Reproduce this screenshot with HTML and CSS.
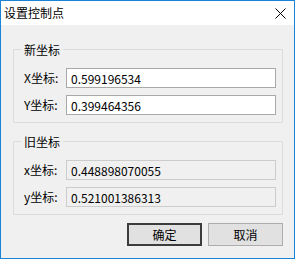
FILE: index.html
```html
<!DOCTYPE html>
<html lang="zh-CN">
<head>
    <meta charset="UTF-8">
    <title>设置控制点</title>
    <link rel="stylesheet" href="styles.css">
</head>
<body>
    <div class="window">
        <div class="titlebar">
            <span class="title">设置控制点</span>
            <svg class="close" width="11" height="11" viewBox="0 0 11 11">
                <path d="M0.5 0.5 L10.5 10.5 M10.5 0.5 L0.5 10.5" stroke="#000" stroke-width="1"/>
            </svg>
        </div>

        <div class="client">
            <fieldset class="group">
                <legend>新坐标</legend>
                <div class="field">
                    <label>X坐标:</label>
                    <input type="text" value="0.599196534">
                </div>
                <div class="field">
                    <label>Y坐标:</label>
                    <input type="text" value="0.399464356">
                </div>
            </fieldset>

            <fieldset class="group">
                <legend>旧坐标</legend>
                <div class="field">
                    <label>x坐标:</label>
                    <input type="text" class="readonly" value="0.448898070055" readonly>
                </div>
                <div class="field">
                    <label>y坐标:</label>
                    <input type="text" class="readonly" value="0.521001386313" readonly>
                </div>
            </fieldset>

            <div class="buttons">
                <button class="btn btn-default">确定</button>
                <button class="btn">取消</button>
            </div>
        </div>
    </div>
</body>
</html>
```

FILE: styles.css
```css
* {
    margin: 0;
    padding: 0;
    box-sizing: border-box;
}

body {
    font-family: "Noto Sans CJK SC", sans-serif;
    font-size: 12px;
    color: #000;
    background: #fff;
}

.window {
    width: 295px;
    height: 259px;
    border: 1px solid #1883d7;
    display: flex;
    flex-direction: column;
}

.titlebar {
    height: 24px;
    background: #fff;
    display: flex;
    align-items: center;
    justify-content: space-between;
    padding: 0 8px 0 3px;
}

.title {
    line-height: 16px;
}

.close {
    display: block;
    margin-top: 1px;
}

.client {
    flex: 1;
    background: #f0f0f0;
    padding: 17px 11px 0 12px;
}

.group {
    border: 1px solid #dcdcdc;
    padding: 11px 6px 7px 10px;
    min-width: 0;
}

.group + .group {
    margin-top: 11px;
}

.group legend {
    line-height: 15px;
    padding: 0 3px;
    margin-left: -3px;
}

.field {
    display: flex;
    align-items: center;
    height: 20px;
}

.field + .field {
    margin-top: 7px;
}

.field label {
    width: 42px;
    line-height: 16px;
}

.field input {
    width: 210px;
    height: 20px;
    border: 1px solid #a9a9a9;
    background: #fff;
    padding: 0 4px;
    font-family: inherit;
    font-size: 12px;
    color: #000;
    outline: none;
}

.field input.readonly {
    background: #f0f0f0;
    border-color: #cccccc;
}

.buttons {
    display: flex;
    justify-content: flex-end;
    gap: 6px;
    margin-top: 8px;
}

.btn {
    width: 75px;
    height: 23px;
    background: #e1e1e1;
    border: 1px solid #adadad;
    font-family: inherit;
    font-size: 12px;
    color: #000;
}

.btn-default {
    border: 2px solid #3c3c3c;
}
```
